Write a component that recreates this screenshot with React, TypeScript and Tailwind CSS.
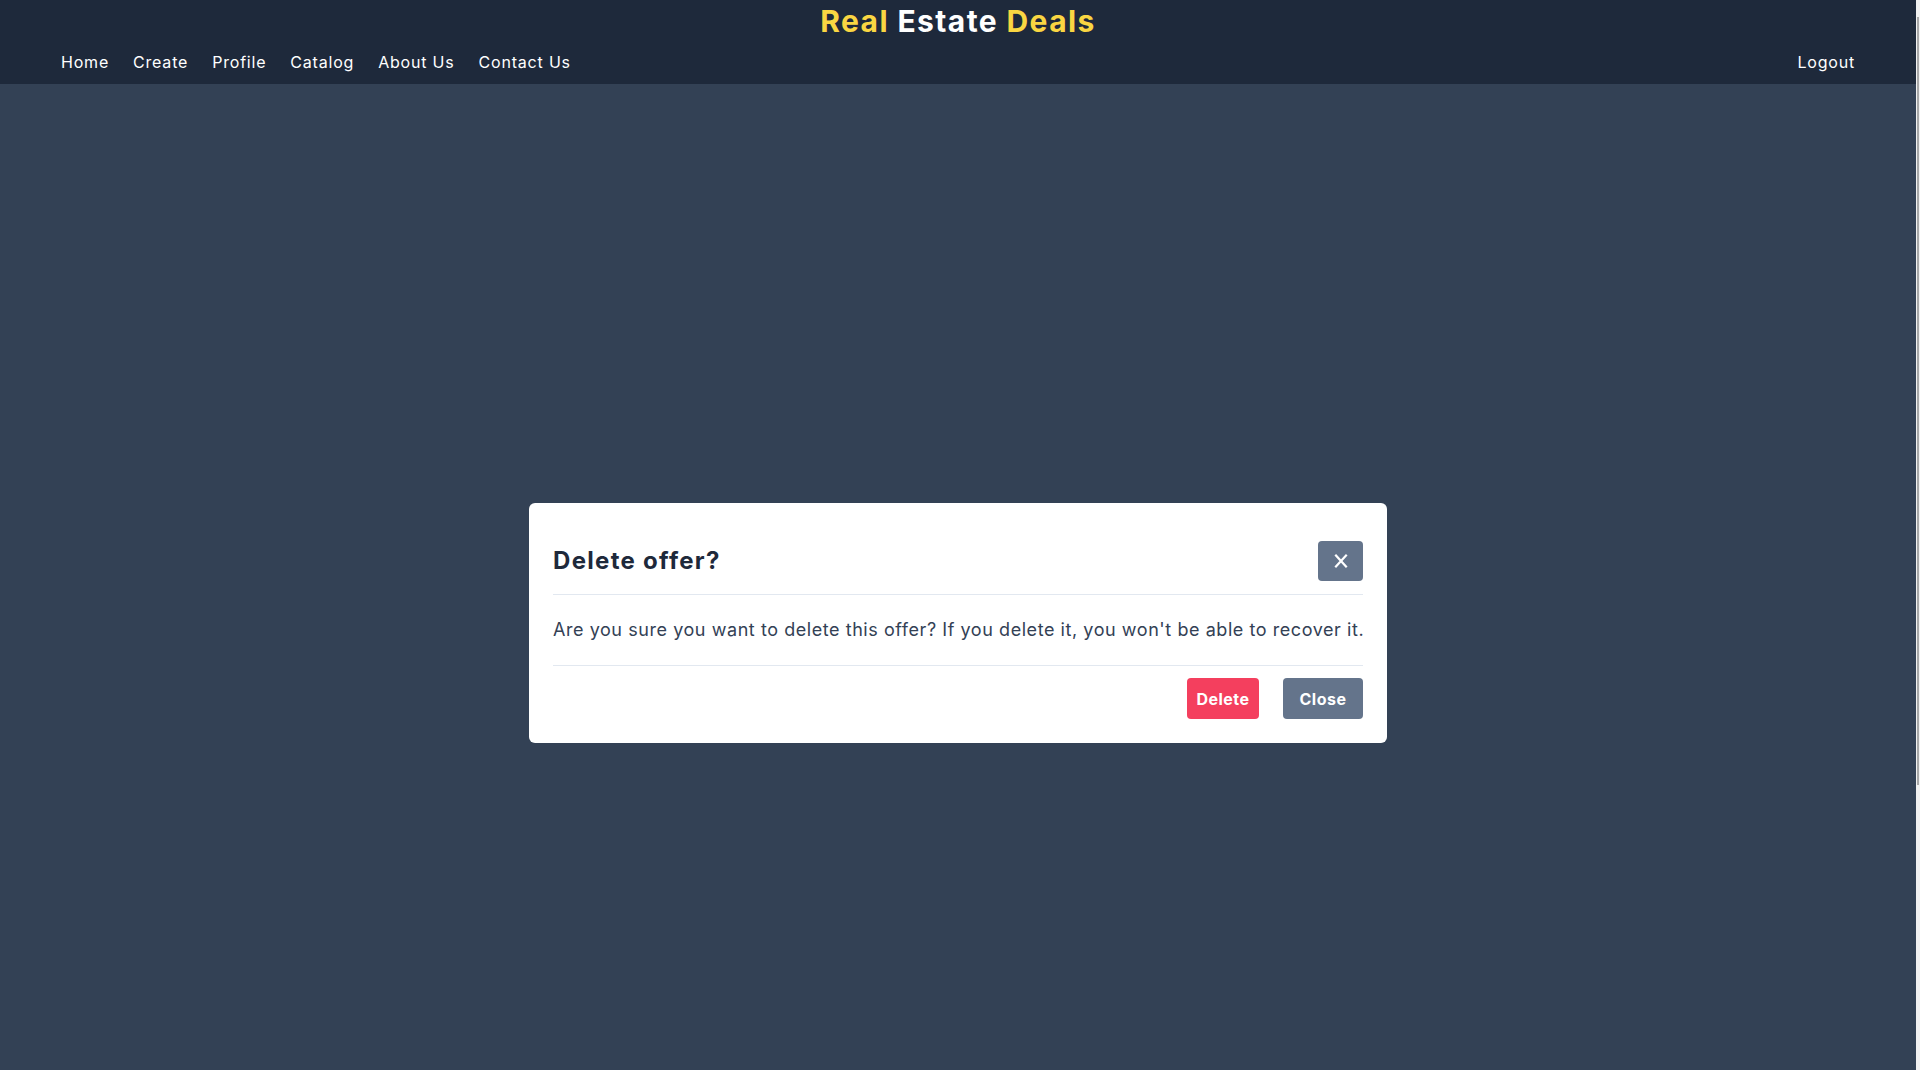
import React from "react";

export default function App() {
  const font = { fontFamily: "Inter, 'Noto Sans', sans-serif" };
  return (
    <div className="flex h-[1070px] w-[1920px] overflow-hidden bg-[#334155]" style={font}>
      <div className="flex min-w-0 flex-1 flex-col">
        <header className="h-[84px] bg-[#1e293b] flex flex-col">
          <div className="flex justify-center pt-[3px]">
            <h1 className="text-[30px] leading-[36px] font-bold tracking-[1.4px]">
              <span className="text-[#fad642]">Real</span>{" "}
              <span className="text-white">Estate</span>{" "}
              <span className="text-[#fad642]">Deals</span>
            </h1>
          </div>
          <nav className="flex items-center justify-between pl-[49px] pr-[49px] pt-[11px]">
            <ul className="flex items-center text-white text-[16px] leading-[24px] tracking-[0.8px]">
              <li className="px-3">Home</li>
              <li className="px-3">Create</li>
              <li className="px-3">Profile</li>
              <li className="px-3">Catalog</li>
              <li className="px-3">About Us</li>
              <li className="px-3">Contact Us</li>
            </ul>
            <div className="px-3 text-white text-[16px] leading-[24px] tracking-[0.8px]">Logout</div>
          </nav>
        </header>
        <main className="flex flex-1 justify-center pt-[419px]">
          <div className="h-fit w-[858px] rounded-[6px] bg-white px-6 pb-6">
            <div className="flex items-center justify-between border-b border-[#e2e8f0] pt-[38px] pb-[13px]">
              <h2 className="text-[24px] leading-[32px] font-bold tracking-[1.3px] text-[#1e293b]">Delete offer?</h2>
              <button className="flex h-[40px] w-[45px] items-center justify-center rounded-[4px] bg-[#64748b] text-white">
                <svg width="18" height="18" viewBox="0 0 18 18" fill="none" stroke="white" strokeWidth="2.2" strokeLinecap="square">
                  <path d="M4 3.5 L14 14.5 M14 3.5 L4 14.5" />
                </svg>
              </button>
            </div>
            <div className="border-b border-[#e2e8f0] py-[21px]">
              <p className="whitespace-nowrap text-[18px] leading-[28px] tracking-[0.56px] text-[#334155]">
                Are you sure you want to delete this offer? If you delete it, you won't be able to recover it.
              </p>
            </div>
            <div className="flex justify-end gap-6 pt-[12px]">
              <button className="h-[41px] w-[72px] rounded-[4px] bg-[#f43f5e] text-[16px] font-bold tracking-[0.5px] text-white">Delete</button>
              <button className="h-[41px] w-[80px] rounded-[4px] bg-[#64748b] text-[16px] font-bold tracking-[0.5px] text-white">Close</button>
            </div>
          </div>
        </main>
      </div>
      <div className="flex w-[4px] flex-col bg-[#f1f1f1] pt-[17px]">
        <div className="ml-[1px] h-[768px] w-[2px] bg-[#a8a8a8]" />
      </div>
    </div>
  );
}
